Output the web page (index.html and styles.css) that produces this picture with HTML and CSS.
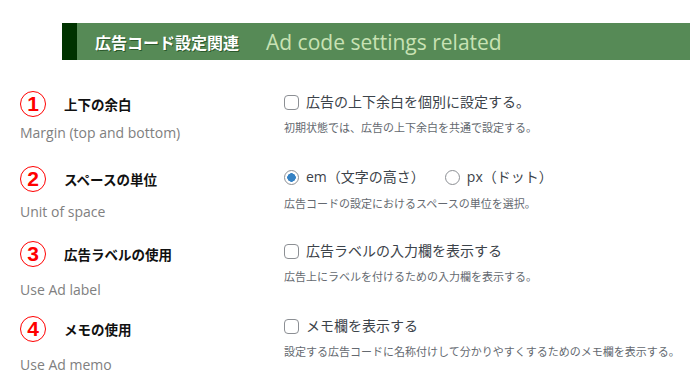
FILE: index.html
```html
<!DOCTYPE html>
<html lang="ja">
<head>
    <meta charset="UTF-8">
    <title>広告コード設定関連</title>
    <link rel="stylesheet" href="styles.css">
</head>
<body>
    <div class="section-head">
        <span class="head-ja">広告コード設定関連</span>
        <span class="head-en">Ad code settings related</span>
    </div>

    <div class="settings">
        <div class="row">
            <div class="label">
                <div class="label-top"><span class="num">1</span><span class="title">上下の余白</span></div>
                <div class="label-en">Margin (top and bottom)</div>
            </div>
            <div class="field">
                <label class="opt"><span class="check"></span>広告の上下余白を個別に設定する。</label>
                <p class="desc">初期状態では、広告の上下余白を共通で設定する。</p>
            </div>
        </div>

        <div class="row wide">
            <div class="label">
                <div class="label-top"><span class="num">2</span><span class="title">スペースの単位</span></div>
                <div class="label-en">Unit of space</div>
            </div>
            <div class="field">
                <div class="radios">
                    <label class="opt"><span class="radio on"></span>em（文字の高さ）</label>
                    <label class="opt"><span class="radio"></span>px（ドット）</label>
                </div>
                <p class="desc">広告コードの設定におけるスペースの単位を選択。</p>
            </div>
        </div>

        <div class="row tall">
            <div class="label">
                <div class="label-top"><span class="num">3</span><span class="title">広告ラベルの使用</span></div>
                <div class="label-en">Use Ad label</div>
            </div>
            <div class="field">
                <label class="opt"><span class="check"></span>広告ラベルの入力欄を表示する</label>
                <p class="desc">広告上にラベルを付けるための入力欄を表示する。</p>
            </div>
        </div>

        <div class="row tall">
            <div class="label">
                <div class="label-top"><span class="num">4</span><span class="title">メモの使用</span></div>
                <div class="label-en">Use Ad memo</div>
            </div>
            <div class="field">
                <label class="opt"><span class="check"></span>メモ欄を表示する</label>
                <p class="desc">設定する広告コードに名称付けして分かりやすくするためのメモ欄を表示する。</p>
            </div>
        </div>
    </div>
</body>
</html>
```

FILE: styles.css
```css
body {
    margin: 0;
    padding: 23px 0 0;
    font-family: "Open Sans", "Noto Sans CJK JP", sans-serif;
    background: #fff;
    color: #1d2327;
    overflow: hidden;
}

.section-head {
    display: flex;
    align-items: center;
    height: 37px;
    margin-left: 62px;
    padding-left: 18px;
    border-left: 15px solid #003300;
    background: #568a56;
}

.head-ja {
    font-family: "Noto Sans CJK JP", sans-serif;
    font-weight: bold;
    font-size: 16px;
    color: #fff;
    text-shadow: 1px 1px 0 rgba(0, 40, 0, 0.5);
}

.head-en {
    margin-left: 27px;
    font-size: 21px;
    color: #c8e2b4;
}

.settings {
    padding: 30px 0 0 20px;
}

.row {
    display: grid;
    grid-template-columns: 264px 1fr;
    height: 75px;
}

.label-top {
    display: flex;
    align-items: center;
    height: 28px;
}

/* circled number */
.num {
    box-sizing: border-box;
    width: 26px;
    height: 26px;
    margin-right: 18px;
    border: 1.5px solid #ff0000;
    border-radius: 50%;
    font-family: "Liberation Sans", sans-serif;
    font-weight: bold;
    font-size: 21px;
    line-height: 23px;
    text-align: center;
    color: #ff0000;
}

.title {
    font-family: "Noto Sans CJK JP", sans-serif;
    font-weight: bold;
    font-size: 13.5px;
    color: #111;
}

.label-en {
    margin-top: 5px;
    font-size: 14px;
    color: #808080;
}

.wide .label-en {
    margin-top: 9px;
}

.tall .label-en {
    margin-top: 12px;
}

.field {
    padding-top: 1px;
}

.tall .field {
    padding-top: 0;
}

.opt {
    display: inline-flex;
    align-items: center;
    font-size: 14px;
    color: #3c434a;
    line-height: 22px;
}

.radios {
    display: flex;
    gap: 20px;
}

.check,
.radio {
    display: inline-block;
    box-sizing: border-box;
    width: 15px;
    height: 15px;
    margin-right: 7px;
    border: 1px solid #8c8f94;
    background: #fff;
}

.check {
    border-radius: 4px;
}

.radio {
    border-radius: 50%;
}

.radio.on {
    background: radial-gradient(circle, #3582c4 0 4px, #fff 4.5px);
}

.desc {
    margin: 4px 0 0;
    font-family: "Noto Sans CJK JP", sans-serif;
    font-size: 11px;
    color: #646970;
}

.wide .desc {
    margin-top: 7px;
}
```
